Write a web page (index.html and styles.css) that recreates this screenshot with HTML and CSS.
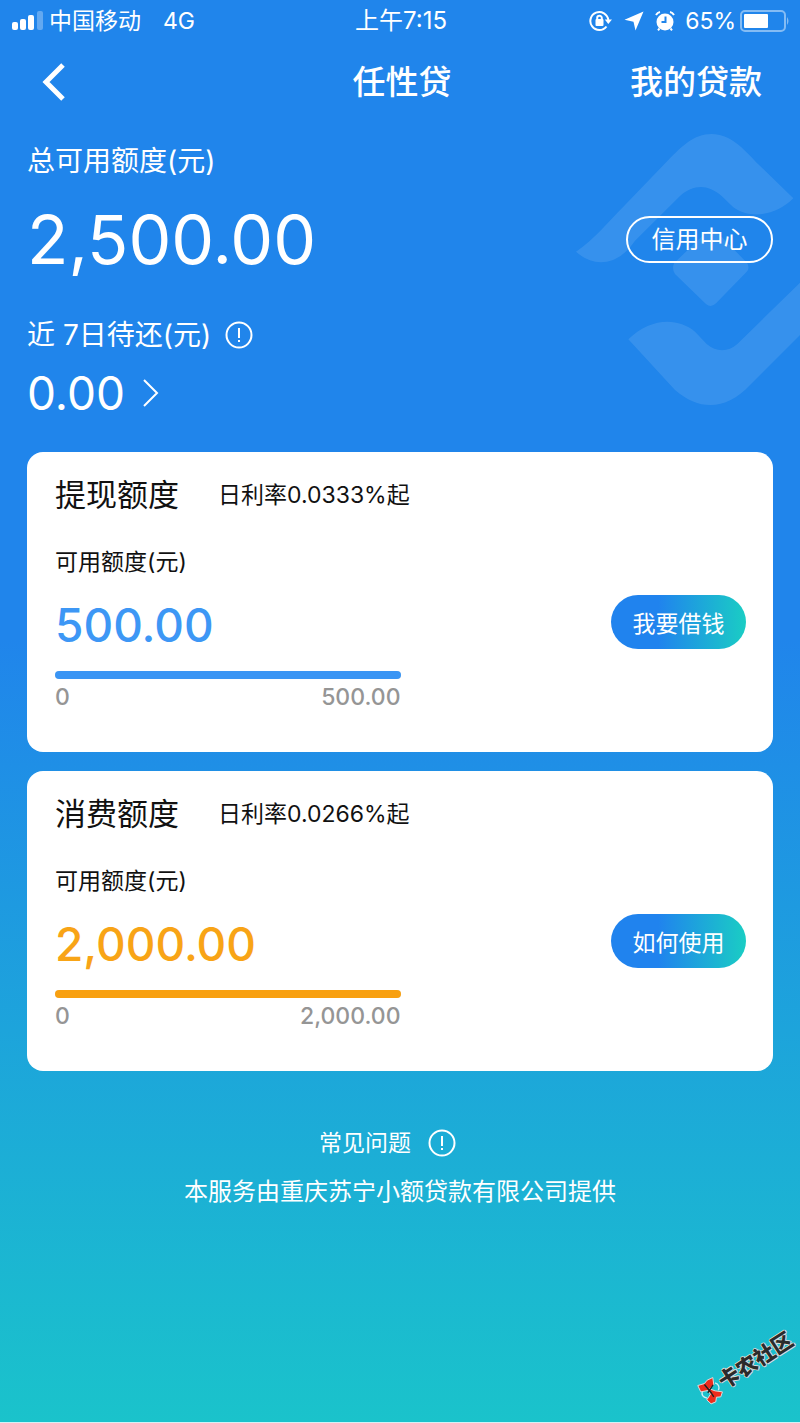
FILE: index.html
```
<!DOCTYPE html>
<html lang="zh-CN">
<head>
<meta charset="utf-8">
<meta name="viewport" content="width=device-width, initial-scale=1">
<title>任性贷</title>
<link rel="stylesheet" href="styles.css">
</head>
<body>
<div class="page">
  <svg class="backdrop" viewBox="0 0 720 900" aria-hidden="true">
    <path d="M48 395 C100 360 150 300 190 260 L325 120 C365 80 400 42 455 42 C510 42 550 85 590 128 L700 235 C650 285 575 300 520 262 L485 228 C440 190 400 195 360 228 L225 362 C180 430 110 450 48 395Z"/>
    <path d="M342 430 L440 335 Q455 322 470 335 L562 430 Q570 445 560 455 L468 550 Q453 565 438 552 L345 462 Q335 448 342 430Z"/>
    <path d="M205 658 C270 595 350 590 405 635 L440 672 C470 698 505 696 532 672 L720 488 V645 L570 795 C500 870 420 875 345 810 L205 658Z"/>
  </svg>

  <div class="status">
    <div class="status-left">
      <svg class="signal" viewBox="0 0 32 20" aria-hidden="true">
        <rect x="0" y="11" width="6" height="8" rx="2"/>
        <rect x="8" y="8" width="6" height="11" rx="2"/>
        <rect x="16" y="4" width="6" height="15" rx="2"/>
        <rect class="dim" x="25" y="0" width="6" height="19" rx="2"/>
      </svg>
      <span class="carrier">中国移动</span>
      <span>4G</span>
    </div>
    <time>上午7:15</time>
    <div class="status-right">
      <svg class="lock" viewBox="0 0 24 22" aria-hidden="true">
        <path class="line" d="M17.5 16.5 A9 9 0 1 1 19.3 10"/>
        <path d="M15.8 9.5 H23 L19.3 14Z"/>
        <rect x="6.5" y="9" width="8" height="7" rx="1"/>
        <path class="line" d="M8.2 10 V8 a2.3 2.3 0 0 1 4.6 0 V10"/>
      </svg>
      <svg class="arrow" viewBox="0 0 20 20" aria-hidden="true"><path d="M19.5 0.5 L11.5 19.5 L9.5 10.8 L0.5 8.8Z"/></svg>
      <svg class="alarm" viewBox="0 0 20 20" aria-hidden="true">
        <circle cx="10" cy="11" r="8.5"/>
        <path class="line" d="M1 4 Q2.5 1.5 5 1 M19 4 Q17.5 1.5 15 1 M4.5 17.5 L3 19.3 M15.5 17.5 L17 19.3"/>
        <path class="hands" d="M10.5 5.5 V11 H6.5"/>
      </svg>
      <span>65%</span>
      <svg class="battery" viewBox="0 0 50 22" aria-hidden="true">
        <rect class="shell" x="1" y="1" width="44" height="20" rx="4"/>
        <rect x="4" y="4" width="24" height="14" rx="1"/>
        <path class="cap" d="M47 7 Q50 11 47 15Z"/>
      </svg>
    </div>
  </div>

  <header class="nav">
    <button class="back" type="button" aria-label="返回">
      <svg viewBox="0 0 24 38" aria-hidden="true"><path d="M21 2 L4 19 L21 36"/></svg>
    </button>
    <h1>任性贷</h1>
    <a class="my-loans" href="#loans">我的贷款</a>
  </header>

  <main>
    <section class="summary">
      <div class="total">
        <div>
          <p class="caption">总可用额度(元)</p>
          <p class="total-value">2,500.00</p>
        </div>
        <button class="credit" type="button">信用中心</button>
      </div>
      <p class="caption due-caption">近 7日待还(元)
        <svg class="info" viewBox="0 0 28 28" role="img" aria-label="说明"><circle cx="14" cy="14" r="12.5"/><path d="M14 7 V17 M14 19 V21"/></svg>
      </p>
      <a class="due" href="#due">0.00
        <svg class="chevron" viewBox="0 0 16 28" aria-hidden="true"><path d="M1 1 L14 14 L1 27"/></svg>
      </a>
    </section>

    <section class="card blue">
      <div class="card-head"><h2>提现额度</h2><p>日利率0.0333%起</p></div>
      <p class="card-caption">可用额度(元)</p>
      <div class="card-main"><p class="amount">500.00</p><button class="action" type="button">我要借钱</button></div>
      <div class="gauge">
        <div class="track"><div class="fill" style="width:100%"></div></div>
        <div class="scale"><span>0</span><span>500.00</span></div>
      </div>
    </section>

    <section class="card orange">
      <div class="card-head"><h2>消费额度</h2><p>日利率0.0266%起</p></div>
      <p class="card-caption">可用额度(元)</p>
      <div class="card-main"><p class="amount">2,000.00</p><button class="action" type="button">如何使用</button></div>
      <div class="gauge">
        <div class="track"><div class="fill" style="width:100%"></div></div>
        <div class="scale"><span>0</span><span>2,000.00</span></div>
      </div>
    </section>
  </main>

  <footer class="foot">
    <a href="#faq">常见问题
      <svg class="info" viewBox="0 0 28 28" aria-hidden="true"><circle cx="14" cy="14" r="12.5"/><path d="M14 7 V17 M14 19 V21"/></svg>
    </a>
    <p>本服务由重庆苏宁小额贷款有限公司提供</p>
  </footer>

  <div class="stamp">
    <svg viewBox="0 0 26 26" aria-hidden="true">
      <g transform="translate(13 13) rotate(33) scale(0.3333) translate(-66 -214)">
        <path class="ring" d="M82 190 Q98 196 92 212 M44 214 Q38 232 58 236"/>
        <path d="M30 198 L50 192 L58 182 L75 174 L78 195 L66 208 L82 214 L104 217 L99 232 L86 233 L84 247 L70 253 L57 241 L68 224 L60 213 L39 217Z"/>
        <path class="ink" d="M50 195 L72 222 M76 196 L60 220 M72 222 L78 232"/>
      </g>
    </svg>
    <span>卡农社区</span>
  </div>
</div>
</body>
</html>
```

FILE: styles.css
```
* { box-sizing: border-box; }

body {
  margin: 0;
  color: #fff;
  font-family: Inter, "Noto Sans CJK SC", sans-serif;
}

h1, h2, p { margin: 0; font-weight: 400; }
a { color: inherit; text-decoration: none; }
button { padding: 0; border: 0; background: none; color: inherit; font: inherit; cursor: pointer; }
svg { display: block; flex: none; fill: none; }

.page {
  position: relative;
  display: flex;
  flex-direction: column;
  min-height: 100vh;
  overflow: hidden;
  border-bottom: 1px solid #d4f2f5;
  background: linear-gradient(#2085eb 45%, #1ac3cb);
}

.backdrop {
  position: absolute;
  top: 120px;
  right: 0;
  width: 240px;
  fill: #fff;
  fill-opacity: 0.1;
}

.status {
  display: grid;
  grid-template-columns: 1fr auto 1fr;
  align-items: center;
  height: 41px;
  padding: 0 10px 0 12px;
  font-size: 23px;
  line-height: 32px;
}
.status time { font-size: 24px; }
.status svg { fill: #fff; }
.status-left, .status-right { display: flex; align-items: center; }
.status-right { justify-content: flex-end; }
.status .line { fill: none; stroke: #fff; stroke-width: 2; }
.status .dim { opacity: 0.3; }
.signal { width: 32px; margin-right: 5px; }
.carrier { margin-right: 22px; }
.lock { width: 24px; margin-right: 11px; }
.arrow { width: 20px; margin-right: 11px; }
.alarm { width: 20px; margin-right: 10px; }
.status .hands { fill: none; stroke: #2085eb; stroke-width: 2; }
.battery { width: 50px; margin-left: 4px; }
.battery .shell { fill: none; stroke: #fff; stroke-width: 2; stroke-opacity: 0.45; }
.battery .cap { fill-opacity: 0.45; }

.nav {
  display: grid;
  grid-template-columns: 1fr auto 1fr;
  align-items: center;
  height: 82px;
  padding: 0 38px 0 42px;
  font-size: 33px;
  line-height: 48px;
}
.nav h1 { font-size: 33px; font-weight: 500; }
.back { justify-self: start; }
.back svg { width: 24px; stroke: #fff; stroke-width: 5; }
.my-loans { justify-self: end; font-weight: 500; }

main {
  display: flex;
  flex-direction: column;
  gap: 19px;
  padding: 20px 27px 0;
}

.summary { padding-bottom: 14px; }
.total { display: flex; justify-content: space-between; align-items: flex-end; }
.caption { font-size: 28px; line-height: 36px; }
.total-value { margin-top: 20px; font-size: 68px; line-height: 80px; }
.credit {
  width: 147px;
  height: 47px;
  margin-bottom: 16px;
  border: 2px solid #fff;
  border-radius: 24px;
  font-size: 24px;
  line-height: 32px;
}
.due-caption { display: flex; align-items: center; gap: 14px; margin-top: 38px; }
.info { width: 28px; stroke: #fff; stroke-width: 2; }
.due { display: inline-flex; align-items: center; gap: 18px; margin-top: 14px; font-size: 46px; line-height: 52px; }
.chevron { width: 16px; stroke: #fff; stroke-width: 2; }

.card {
  padding: 19px 27px 41px 28px;
  border-radius: 16px;
  background: #fff;
  color: #111;
}
.card-head { display: flex; align-items: center; gap: 39px; line-height: 48px; }
.card-head h2 { font-size: 31px; }
.card-head p { font-size: 23px; }
.card-caption { margin-top: 27px; font-size: 23px; line-height: 32px; }
.card-main { display: flex; justify-content: space-between; align-items: flex-start; margin-top: 17px; }
.amount { padding-top: 2px; font-size: 46px; font-weight: 500; line-height: 56px; }
.action {
  width: 135px;
  height: 54px;
  border-radius: 27px;
  background: linear-gradient(90deg, #2083ee 35%, #1acdc4);
  color: #fff;
  font-size: 23px;
}
.gauge { width: 50%; margin-top: 18px; }
.track { height: 8px; border-radius: 4px; background: #e6e6e6; }
.fill { height: 100%; border-radius: 4px; }
.scale { display: flex; justify-content: space-between; margin-top: 4px; color: #959595; font-size: 23px; font-weight: 500; line-height: 28px; }
.blue .amount { color: #3d97f5; }
.blue .fill { background: #3a95f4; }
.orange .amount { color: #f8a416; }
.orange .fill { background: #f8a010; }

.foot {
  display: flex;
  flex-direction: column;
  align-items: center;
  gap: 17px;
  padding: 56px 27px 0;
  font-size: 24px;
  line-height: 32px;
}
.foot a { display: flex; align-items: center; gap: 17px; padding-right: 25px; font-size: 23px; }

.stamp {
  position: absolute;
  right: 0;
  bottom: 40px;
  display: flex;
  align-items: center;
  color: #2b2b2b;
  font-size: 21px;
  font-weight: 900;
  line-height: 28px;
  text-shadow: 1px 0 #ddd, -1px 0 #ddd, 0 1px #ddd, 0 -1px #ddd;
  transform: rotate(-33deg);
}
.stamp svg { width: 26px; overflow: visible; fill: #ee2c1d; stroke: #ddd; stroke-width: 3; }
.stamp .ring { fill: none; stroke: #cfeff5; stroke-width: 4; }
.stamp .ink { stroke: #222; stroke-width: 4; }
```
